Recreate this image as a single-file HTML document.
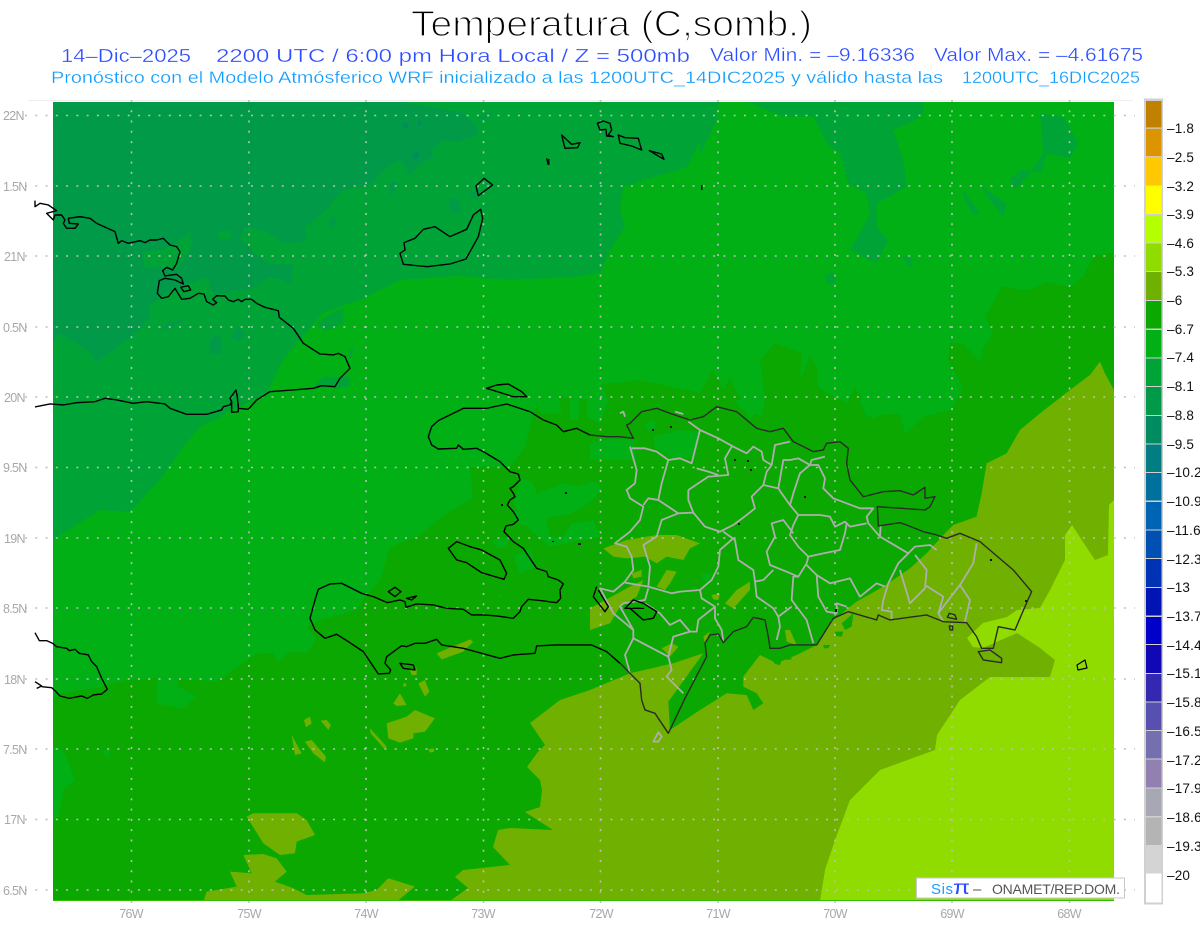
<!DOCTYPE html>
<html lang="es">
<head>
<meta charset="utf-8">
<title>Temperatura (C,somb.)</title>
<style>
html,body{margin:0;padding:0;background:#fff;width:1200px;height:927px;overflow:hidden}
svg{display:block}
text{font-family:"Liberation Sans",sans-serif}
.tk{font-size:12.500px;fill:#a8a8a8;letter-spacing:-.7px}
.cb{font-size:13.500px;fill:#111;letter-spacing:.2px}
.l2{font-size:18px;fill:#2a4bff;stroke:#fff;stroke-width:.3px}
.l3{font-size:16.500px;fill:#0d9cff;stroke:#fff;stroke-width:.25px}
</style>
</head>
<body>
<svg width="1200" height="927" viewBox="0 0 1200 927" xmlns="http://www.w3.org/2000/svg">
<rect width="1200" height="927" fill="#fff"/>
<rect x="28" y="100" width="1105" height="1" fill="#eee"/>

<!-- map fields -->
<defs><clipPath id="m"><rect x="53" y="102" width="1061" height="799"/></clipPath></defs>
<g clip-path="url(#m)">
<rect x="53" y="102" width="1061" height="799" fill="#009a48"/>
<!-- mid -->
<polygon fill="#00a436" points="403,102 463,113 477,127 477,135 457,142 443,140 432,150 433,157 423,162 410,175 400,160 390,165 370,185 343,190 320,217 305,227 307,242 297,263 293,287 283,280 270,277 253,287 237,293 233,320 220,320 200,313 207,293 185,320 160,333 130,337 97,362 87,350 60,333 53,343 53,901 1114,901 1114,102"/>
<!-- dark patches inside mid / teal -->
<g transform="translate(390,110) scale(.3333)" fill="#009a48">
<polygon points="180,265 205,270 213,300 195,310 178,295"/>
<polygon points="240,245 265,235 262,265 245,270"/>
<polygon points="0,215 25,215 10,250 0,255"/>
<polygon points="260,20 310,5 280,30"/>
</g>
<g transform="translate(0,180) scale(.3333)" fill="#00a436">
<polygon points="650,155 690,150 695,175 660,180"/>
<polygon points="430,215 490,208 520,195 570,155 575,205 530,270 470,262 435,265"/>
<polygon points="720,175 745,140 800,155 850,190 920,185 915,145 1000,70 1040,25 1080,30 1080,240 960,330 870,330 880,255 800,250 760,215"/>
<polygon points="445,380 500,340 620,290 640,345 720,330 730,360 700,420 660,425 610,405 500,430 480,470 430,470 390,475 450,410"/>
</g>
<g transform="translate(0,180) scale(.3333)" fill="#009a48">
<polygon points="985,130 1005,105 1010,135 995,145"/>
<polygon points="625,490 650,460 665,480 665,520 630,525"/>
<polygon points="695,470 715,440 735,460 715,485"/>
<polygon points="835,60 855,50 850,80 835,85"/>
</g>
<g transform="translate(390,110) scale(.3333)" fill="#008c60">
<polygon points="40,40 55,40 55,55 40,55"/>
<polygon points="85,25 95,45 85,45"/>
<polygon points="70,130 85,125 85,145 70,145"/>
</g>
<!-- bright -->
<polygon fill="#00b014" points="53,540 100,510 130,512 160,480 185,445 200,427 267,393 283,360 323,313 360,300 400,280 460,276 507,280 573,277 600,273 610,250 625,227 620,210 623,187 687,167 720,102 1114,102 1114,901 53,901"/>
<!-- mid patches on bright (top right) -->
<g transform="translate(700,100) scale(.3333)" fill="#00a436">
<polygon points="140,5 250,50 340,50 380,130 420,160 445,250 500,280 510,340 490,380 450,450 530,490 565,420 530,380 530,310 620,260 610,180 580,90 640,65 670,40 670,5"/>
<polygon points="1020,40 1090,50 1135,130 1110,175 1040,160 1025,215 960,210 930,240 945,270 990,220 1030,160"/>
<polygon points="790,270 840,340 820,345 790,290"/>
<polygon points="840,255 920,310 910,350 870,300"/>
<polygon points="0,165 50,60 55,5 0,5"/>
<polygon points="610,470 630,470 640,502 615,490"/>
<polygon points="375,525 405,520 405,548 380,552"/>
</g>
<g transform="translate(0,180) scale(.3333)" fill="#00a436">
<polygon points="890,385 915,380 925,450 895,445"/>
<polygon points="950,430 990,400 1030,385 1030,430 975,455"/>
<polygon points="940,620 970,590 1050,590 1050,620 1010,625"/>
<polygon points="1045,515 1062,500 1050,540"/>
</g>
<!-- green -->
<polygon fill="#0aa800" points="53,700 63,693 97,688 127,680 157,678 197,680 217,682 230,672 243,663 257,653 273,653 277,662 290,652 307,653 317,638 307,627 320,620 357,610 363,600 380,580 390,547 417,537 447,513 473,498 470,467 510,467 525,447 532,420 540,395 590,400 600,385 640,380 700,393 713,370 723,390 730,377 750,420 765,400 760,360 775,343 802,353 800,380 810,357 817,367 818,387 827,393 847,403 855,387 873,420 900,397 917,420 920,403 953,407 963,387 948,360 950,343 963,343 980,362 983,348 993,333 985,317 1002,287 1027,290 1047,282 1070,287 1083,277 1095,255 1114,253 1114,901 53,901"/>
<!-- bright patches over green -->
<g transform="translate(300,380) scale(.3333)" fill="#00b014">
<polygon points="705,50 770,20 785,100 720,100"/>
<polygon points="810,60 840,50 835,120 810,120"/>
<polygon points="860,40 905,15 925,60 900,130 860,110"/>
<polygon points="660,290 700,310 710,340 790,310 830,320 880,305 905,325 875,365 815,400 740,415 750,470 790,470 815,430 880,420 900,470 850,480 750,500 680,440 640,370"/>
<polygon points="630,380 690,420 690,440 650,430"/>
<polygon points="575,480 630,470 620,500 590,505"/>
<polygon points="640,530 690,505 710,560 660,580"/>
<polygon points="595,640 610,650 600,660"/>
</g>
<g transform="translate(590,400) scale(.3333)" fill="#00b014">
<polygon points="0,130 60,115 130,120 140,180 60,180 0,180"/>
<polygon points="190,110 270,90 330,95 310,170 250,175 195,145"/>
<polygon points="165,70 195,60 195,90 175,95"/>
<polygon points="0,245 30,250 15,280 0,285"/>
<polygon points="435,0 525,0 515,50 450,25"/>
<polygon points="810,0 1100,0 1085,30 1000,50 945,100 930,40 830,50"/>
<polygon points="335,520 365,520 355,545 335,545"/>
</g>
<g transform="translate(30,600) scale(.3333)" fill="#00b014">
<polygon points="67,440 100,450 135,540 100,570 85,650 67,660"/>
<polygon points="380,240 440,230 445,260 500,290 460,325 380,310"/>
<polygon points="475,165 515,155 510,178 480,185"/>
<polygon points="220,450 240,450 235,470 222,468"/>
</g>
<!-- olive -->
<g transform="translate(590,400) scale(.3333)">
<polygon fill="#70b000" points="1572,-30 1545,-80 1530,-115 1500,-75 1440,-30 1350,40 1290,90 1250,160 1190,190 1175,280 1160,350 1090,375 1060,405 1010,460 960,505 880,560 800,605 730,660 680,735 620,765 560,790 510,765 460,830 460,860 500,880 520,910 490,930 470,885 410,880 330,930 240,990 235,905 340,760 250,790 120,820 0,870 -90,900 -180,969 -135,1035 -159,1059 -189,1101 -150,1140 -144,1170 -150,1221 -195,1236 -111,1290 -240,1284 -276,1290 -291,1341 -240,1395 -381,1410 -405,1431 -366,1464 -420,1503 1572,1503"/>
<polygon fill="#70b000" points="40,445 110,420 200,405 260,405 330,430 300,445 280,480 230,470 200,490 165,470 110,475 70,470"/>
<polygon fill="#70b000" points="0,625 120,560 160,540 140,590 90,620 60,670 0,690"/>
<polygon fill="#70b000" points="125,520 155,510 155,530 130,535"/>
<polygon fill="#70b000" points="200,560 230,510 260,515 240,550 225,570"/>
<polygon fill="#70b000" points="405,610 440,570 480,545 480,570 430,625"/>
<polygon fill="#70b000" points="340,710 360,695 345,730"/>
<polygon fill="#70b000" points="215,745 245,730 265,740 240,770"/>
<polygon fill="#70b000" points="585,690 600,690 620,735 590,725"/>
<polygon fill="#70b000" points="365,585 390,580 385,600 370,598"/>
<polygon fill="#0aa800" points="550,785 575,780 570,795 555,792"/>
<polygon fill="#0aa800" points="585,770 600,760 605,778 590,780"/>
<polygon fill="#0aa800" points="700,735 720,735 715,745 702,745"/>
<polygon fill="#0aa800" points="735,695 760,695 755,710 738,708"/>
<polygon fill="#0aa800" points="755,670 790,640 785,680 765,690"/>
</g>
<g transform="translate(30,600) scale(.3333)" fill="#70b000">
<polygon points="650,650 670,640 800,640 830,660 855,705 800,725 795,760 750,765 700,730"/>
<polygon points="520,905 530,875 620,860 600,815 665,820 640,765 700,762 740,775 770,815 735,845 790,865 830,885 1000,880 1040,870 1075,835 1155,860 1100,905"/>
<polygon points="1070,370 1130,350 1155,330 1215,355 1185,395 1150,400 1150,415 1110,428 1075,415"/>
<polygon points="1090,310 1110,280 1130,315 1100,318"/>
<polygon points="1165,250 1185,240 1198,275 1185,290"/>
<polygon points="1140,210 1160,205 1160,225 1145,225"/>
<polygon points="1020,385 1070,440 1065,448 1022,400"/>
<polygon points="785,405 815,460 795,465"/>
<polygon points="825,425 845,420 888,470 885,487 850,460"/>
<polygon points="822,360 840,350 845,370 828,382"/>
<polygon points="872,362 890,360 903,375 895,390"/>
<polygon points="1220,160 1320,118 1330,125 1300,155 1235,178"/>
<polygon points="1195,448 1212,445 1212,455 1200,458"/>
<polygon points="1120,250 1130,250 1128,260 1120,260"/>
</g>
<!-- lime -->
<polygon fill="#90dc00" points="1114,500 1109,505 1108,555 1095,560 1085,545 1072,525 1065,535 1065,560 1050,590 1040,608 1017,610 1007,617 983,623 967,638 973,647 983,648 1017,633 1040,648 1055,660 1050,677 1040,677 990,677 960,700 937,735 935,750 880,770 850,800 835,840 825,870 820,901 1114,901"/>
<rect x="53" y="900" width="1061" height="1.500" fill="#2fc000"/>
</g>

<!-- grid -->
<g stroke="#bdbdbd" stroke-width="1.600" stroke-dasharray="2 8.27" fill="none">
<path d="M131.500,100V908M249,100V908M366,100V908M483.500,100V908M600.500,100V908M718,100V908M835,100V908M952,100V908M1069.500,100V908"/>
<path d="M25,115.500H1135M25,186H1135M25,256H1135M25,327H1135M25,397H1135M25,467.500H1135M25,538H1135M25,608H1135M25,679H1135M25,749H1135M25,819.500H1135M25,890H1135"/>
</g>

<!-- provinces DR -->
<g transform="translate(590,400) scale(.3333)" fill="none" stroke="#aeaeae" stroke-width="5.400" stroke-linejoin="round">
<polyline points="120,140 140,210 135,250 110,270 120,295 160,320 150,360 120,395 75,430 110,440 125,470 130,510 105,545 70,575 30,565 70,640 130,690 130,715 105,765 120,820"/>
<polyline points="125,145 165,145 200,155 235,180 270,175 305,190 315,150 330,90 295,65"/>
<polyline points="330,90 385,115 430,140 470,160 490,140 515,155 520,180 545,195 555,135 600,125"/>
<polyline points="235,180 215,250 205,300 175,295 160,315"/>
<polyline points="205,300 265,340 310,338 345,380 390,395 430,375 470,345 495,325 485,290 520,255 530,215 545,195"/>
<polyline points="520,255 565,265 580,180 600,180 625,175 660,195 685,195 705,235 700,265 730,295 810,325 850,325 830,350 835,370 870,410 955,460 925,490 895,550 880,600 875,630 905,635 905,660"/>
<polyline points="660,195 665,180 705,170"/>
<polyline points="565,265 575,280 600,315 625,345 690,345 720,350 735,380 765,365 780,380 830,370"/>
<polyline points="625,345 610,375 600,405 625,440 655,470 700,460 750,450 765,400 770,370"/>
<polyline points="600,315 610,280 630,220 660,195"/>
<polyline points="610,400 580,360 545,370 555,410 530,455 540,495 590,515 625,530 650,490 655,470"/>
<polyline points="650,495 680,525 720,550 780,535 810,590 860,550 885,560"/>
<polyline points="680,525 685,590 710,635 740,640 740,610 770,620"/>
<polyline points="625,530 610,530 605,600 650,660 670,730"/>
<polyline points="605,620 565,650 570,680 560,720"/>
<polyline points="550,510 520,540 495,545 500,590 550,625 565,650"/>
<polyline points="495,545 490,510 445,480 435,420 400,395"/>
<polyline points="430,415 390,450 385,500 365,540 330,570 270,575 245,580 175,560 105,548"/>
<polyline points="175,560 180,500 160,435 200,410 215,360 265,340"/>
<polyline points="175,565 165,600 100,610 90,620 130,690"/>
<polyline points="330,570 335,595 375,620 375,655 395,690 400,725"/>
<polyline points="375,620 325,660 320,695 300,695 270,660 240,675 210,640 165,610"/>
<polyline points="300,695 250,710 235,770 130,715"/>
<polyline points="235,770 245,810 230,830 280,880"/>
<polyline points="295,270 355,230 415,225 405,175 425,140"/>
<polyline points="295,270 295,300 310,338"/>
<polyline points="320,205 355,215 385,225"/>
<polyline points="955,460 975,440 1020,435 1040,450"/>
<polyline points="975,465 1010,510 1005,565 960,610 930,510"/>
<polyline points="1005,555 1060,590 1045,640 1060,665"/>
<polyline points="1110,555 1140,600 1125,665"/>
<polyline points="1110,555 1150,490 1160,430"/>
<polyline points="1110,555 1060,620 1045,640"/>
<polyline points="870,410 872,378"/>
<polygon points="190,1025 205,997 215,1010 205,1025"/>
<polyline points="90,40 100,35 105,50"/>
<polyline points="255,35 280,42"/>
</g>

<!-- coastlines -->
<g fill="none" stroke="#000" stroke-width="4.200" stroke-linejoin="round">
<g transform="translate(0,180) scale(.3333)">
<polyline points="105,62 105,80 120,70 145,75 170,92 140,100 160,120 165,105 185,105 195,120 190,130 200,145 225,145 235,132 208,130 205,115 240,110 270,115 290,130 345,155 355,190 365,182 385,190 420,182 435,188 450,180 470,180 490,175 510,195 530,200 540,215 530,250 518,270 500,262 488,272 495,288 530,283 545,295 550,312 525,300 495,295 478,302 472,340 485,355 505,350 525,325 545,358 570,355 595,340 612,342 620,365 640,375 650,368 638,358 650,347 675,348 685,360 700,365 715,358 725,365 735,358 755,358 770,370 795,382 835,392 838,412 880,445 910,490 960,522 1000,525 1015,520 1035,530 1050,565 1020,595 1005,620 965,617 940,625 880,630 810,635 770,660 745,688 715,685 712,650 708,630 690,655 695,665 690,675 670,680 665,690 620,703 560,703 510,685 495,672 440,665 400,670 350,660 315,655 285,665 230,668 190,675 150,672 105,681"/>
<polygon points="542,322 565,317 572,330 552,335"/>
<polyline points="695,665 695,697 715,695 715,670"/>
</g>
<g transform="translate(30,620) scale(.3333)">
<polyline points="15,38 28,62 50,62 68,70 80,80 110,85 118,92 135,88 148,100 175,105 185,125 200,140 215,175 232,208 215,222 190,225 172,235 155,228 118,235 90,228 75,212 65,203 35,200"/>
<polyline points="15,185 35,198 20,205"/>
</g>
<g transform="translate(390,110) scale(.3333)">
<polygon points="30,430 45,420 42,398 75,385 100,358 135,350 180,380 230,358 250,315 272,298 278,325 265,380 228,447 180,462 112,470 40,463"/>
<polygon points="258,228 282,205 308,225 265,257"/>
<polygon points="515,75 545,103 570,98 563,113 525,115"/>
<polyline points="470,145 475,165"/>
<polygon points="622,40 640,33 660,40 665,60 655,75 670,80 650,78 648,58 630,60"/>
<polygon points="685,75 705,83 745,85 755,120 725,108 690,100"/>
<polygon points="778,122 815,132 822,148"/>
</g>
<g transform="translate(300,380) scale(.3333)">
<polyline points="870,165 830,145 790,155 770,135 730,120 690,95 620,72 560,85 490,85 415,122 395,140 385,170 395,195 415,207 470,205 475,195 490,208 530,205 550,215 600,245 630,275 655,282 660,300 640,320 630,325 640,340 645,350 630,360 622,375 640,395 655,420 640,433 618,438 612,455 640,485 670,505 710,565 740,575 745,590 775,600 790,612 780,630 782,655 770,668 725,662 685,658 665,680 660,695 640,715 590,708 550,705 515,705 490,688 440,685 400,675 350,672 318,682 315,665 300,660 262,668 220,650 185,640 125,610 90,612 55,628 45,660 30,715 45,750 75,775 110,763 145,785 190,815 235,882 268,880 272,870 255,850 260,830 305,797 320,800 345,790 375,790 410,778 425,795 490,805 600,835 640,825 705,820 710,798 770,795 875,795 920,815 960,850"/>
<polygon points="445,505 470,485 510,500 545,510 600,540 620,580 612,598 545,578 500,548 470,540"/>
<polygon points="560,25 590,15 625,12 665,35 680,50 640,50"/>
<polygon points="265,635 285,622 303,635 285,650"/>
<polygon points="300,850 340,855 345,870 310,865"/>
<polygon points="320,655 350,648 335,660"/>
</g>
<g transform="translate(590,400) scale(.3333)" stroke="#2a2a2a">
<polyline points="90,789 120,820 150,850 155,900 165,930 195,940 215,970 235,1000 285,895 350,770 345,730 360,705 385,702 400,728 430,695 470,680 490,652 525,660 535,710 540,745 570,745 600,735 680,735 730,655 775,635 860,660 865,645 900,660 1010,645 1060,665 1130,668 1160,710 1175,745 1210,745 1225,680 1275,690 1305,620 1325,575 1270,510 1170,425 1110,400 1070,415 1040,405 1000,395 950,375 930,368 865,378 862,320 1005,330 1020,320 1035,290 1005,295 1005,262 970,285 930,272 880,275 820,290 780,240 770,190 775,145 750,125 710,130 700,150 670,155 610,125 580,85 540,95 500,85 440,35 380,20 340,50 300,60 240,40 200,25 155,35 120,70 110,75 130,115 90,110 50,110 0,105"/>
<polygon points="1165,755 1200,750 1235,775 1235,788 1180,780"/>
<polygon points="105,625 130,600 160,610 200,635 190,655 160,660 120,625 160,625" stroke="#000"/>
<polyline points="20,560 10,590 45,635 55,620 25,570" stroke="#000"/>
<polygon points="1078,640 1095,645 1100,658 1072,652"/>
<polygon points="1078,678 1088,678 1088,690 1080,690"/>
</g>
<polygon points="1077,665 1085,660 1087,668 1078,670" stroke-width="1.200"/>
</g>
<!-- small cays -->
<g fill="#111">
<rect x="652" y="429" width="2" height="2"/><rect x="670" y="426" width="2" height="2"/><rect x="747" y="460" width="2" height="2"/>
<rect x="734" y="459" width="2" height="2"/><rect x="750" y="469" width="2" height="2"/><rect x="804" y="496" width="2" height="2"/>
<rect x="738" y="523" width="2" height="2"/><rect x="990" y="559" width="2" height="2"/><rect x="1025" y="600" width="2" height="2"/>
<rect x="565" y="492" width="2" height="2"/><rect x="578" y="543" width="3" height="2"/><rect x="552" y="541" width="2" height="1"/>
<rect x="501" y="504" width="2" height="2"/><rect x="835" y="609" width="2" height="3"/>
<rect x="548" y="159" width="1.500" height="6"/><rect x="701" y="185" width="1.500" height="5"/>
</g>

<!-- axis labels -->
<g class="tk">
<text x="3" y="120">22N</text><text x="3" y="191">1.5N</text><text x="4" y="261">21N</text><text x="3" y="332">0.5N</text>
<text x="4" y="402">20N</text><text x="3" y="472">9.5N</text><text x="4" y="543">19N</text><text x="3" y="613">8.5N</text>
<text x="4" y="684">18N</text><text x="3" y="754">7.5N</text><text x="4" y="824">17N</text><text x="3" y="895">6.5N</text>
</g>
<g class="tk" text-anchor="middle">
<text x="131" y="918">76W</text><text x="249" y="918">75W</text><text x="366" y="918">74W</text><text x="483" y="918">73W</text>
<text x="601" y="918">72W</text><text x="718" y="918">71W</text><text x="835" y="918">70W</text><text x="952" y="918">69W</text><text x="1069" y="918">68W</text>
</g>

<!-- title -->
<text x="411" y="36" font-size="36" textLength="401" lengthAdjust="spacingAndGlyphs" fill="#000" stroke="#fff" stroke-width="1.300">Temperatura (C,somb.)</text>
<text class="l2" x="61" y="62" textLength="130" lengthAdjust="spacingAndGlyphs">14–Dic–2025</text>
<text class="l2" x="216" y="62" textLength="474" lengthAdjust="spacingAndGlyphs">2200 UTC / 6:00 pm Hora Local / Z = 500mb</text>
<text class="l2" x="710" y="61" font-size="17" textLength="205" lengthAdjust="spacingAndGlyphs">Valor Min. = –9.16336</text>
<text class="l2" x="934" y="61" font-size="17" textLength="209" lengthAdjust="spacingAndGlyphs">Valor Max. = –4.61675</text>
<text class="l3" x="51" y="83" textLength="892" lengthAdjust="spacingAndGlyphs">Pronóstico con el Modelo Atmósferico WRF inicializado a las 1200UTC_14DIC2025 y válido hasta las</text>
<text class="l3" x="962" y="83" textLength="178" lengthAdjust="spacingAndGlyphs">1200UTC_16DIC2025</text>

<!-- colorbar -->
<rect x="1144" y="98.500" width="19" height="806" fill="#d0d0d0"/>
<g>
<rect x="1146" y="101" width="15.500" height="26.500" fill="#c08000"/>
<rect x="1146" y="128.700" width="15.500" height="27.500" fill="#dc9400"/>
<rect x="1146" y="157.400" width="15.500" height="27.500" fill="#ffc800"/>
<rect x="1146" y="186" width="15.500" height="28" fill="#ffff00"/>
<rect x="1146" y="215" width="15.500" height="27.500" fill="#b4ff00"/>
<rect x="1146" y="243.500" width="15.500" height="27.500" fill="#90dc00"/>
<rect x="1146" y="272" width="15.500" height="28" fill="#70b000"/>
<rect x="1146" y="301" width="15.500" height="27.500" fill="#0aa800"/>
<rect x="1146" y="330" width="15.500" height="27.500" fill="#00b014"/>
<rect x="1146" y="358.500" width="15.500" height="27.500" fill="#00a436"/>
<rect x="1146" y="387" width="15.500" height="28" fill="#009a48"/>
<rect x="1146" y="416" width="15.500" height="27.500" fill="#008c60"/>
<rect x="1146" y="444.500" width="15.500" height="27.500" fill="#007e82"/>
<rect x="1146" y="473" width="15.500" height="27.500" fill="#00709c"/>
<rect x="1146" y="502" width="15.500" height="27.500" fill="#0064b4"/>
<rect x="1146" y="530.500" width="15.500" height="27.500" fill="#0050b4"/>
<rect x="1146" y="559" width="15.500" height="28" fill="#0032b4"/>
<rect x="1146" y="588" width="15.500" height="27.500" fill="#0014b4"/>
<rect x="1146" y="617" width="15.500" height="27" fill="#0000c8"/>
<rect x="1146" y="645" width="15.500" height="28" fill="#1008b4"/>
<rect x="1146" y="674" width="15.500" height="27.500" fill="#3428b0"/>
<rect x="1146" y="702.500" width="15.500" height="27.500" fill="#5850b0"/>
<rect x="1146" y="731" width="15.500" height="27.500" fill="#7470b0"/>
<rect x="1146" y="759.500" width="15.500" height="28" fill="#9280b0"/>
<rect x="1146" y="788.500" width="15.500" height="27.500" fill="#a8a8b4"/>
<rect x="1146" y="817.500" width="15.500" height="27.500" fill="#b4b4b4"/>
<rect x="1146" y="845" width="15.500" height="28.500" fill="#d4d4d4"/>
<rect x="1146" y="873.500" width="15.500" height="29" fill="#fff"/>
</g>
<g class="cb">
<text x="1167" y="133">–1.8</text><text x="1167" y="162">–2.5</text><text x="1167" y="191">–3.2</text><text x="1167" y="219">–3.9</text>
<text x="1167" y="248">–4.6</text><text x="1167" y="276">–5.3</text><text x="1167" y="305">–6</text><text x="1167" y="334">–6.7</text>
<text x="1167" y="362">–7.4</text><text x="1167" y="391">–8.1</text><text x="1167" y="420">–8.8</text><text x="1167" y="449">–9.5</text>
<text x="1167" y="477">–10.2</text><text x="1167" y="506">–10.9</text><text x="1167" y="535">–11.6</text><text x="1167" y="564">–12.3</text>
<text x="1167" y="592">–13</text><text x="1167" y="621">–13.7</text><text x="1167" y="650">–14.4</text><text x="1167" y="678">–15.1</text>
<text x="1167" y="707">–15.8</text><text x="1167" y="736">–16.5</text><text x="1167" y="765">–17.2</text><text x="1167" y="793">–17.9</text>
<text x="1167" y="822">–18.6</text><text x="1167" y="851">–19.3</text><text x="1167" y="880">–20</text>
</g>

<!-- signature -->
<rect x="916.500" y="878" width="208" height="20" fill="#fff" stroke="#c8c8c8" stroke-width="1"/>
<text x="931" y="894" font-size="15" fill="#1a9cff" textLength="22">Sis</text>
<text x="953" y="894" font-size="19" fill="#2a4bff" textLength="17" lengthAdjust="spacingAndGlyphs">π</text>
<text x="973" y="894" font-size="15" fill="#555">–</text>
<text x="992" y="894" font-size="14" fill="#555" textLength="128" lengthAdjust="spacing">ONAMET/REP.DOM.</text>
</svg>
</body>
</html>
